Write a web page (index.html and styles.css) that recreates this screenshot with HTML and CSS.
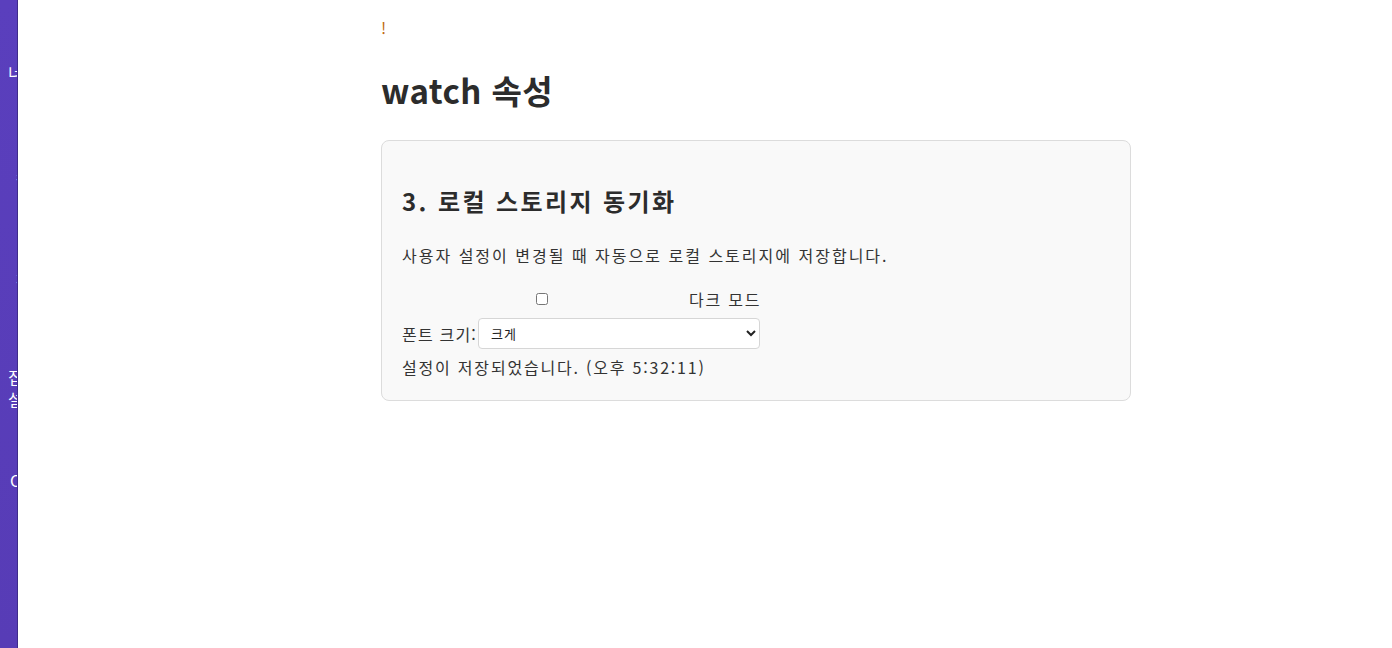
FILE: index.html
```html
<!DOCTYPE html>
<html lang="ko">
<head>
<meta charset="utf-8">
<title>watch 속성</title>
<link rel="stylesheet" href="styles.css">
</head>
<body>
<div class="layout">
  <nav class="sidebar">
    <div class="side-item side-a">너비</div>
    <div class="side-item side-b">ㅋ</div>
    <div class="side-item side-c">ㅈ</div>
    <div class="side-item side-d">집<br>설</div>
    <div class="side-item side-e">C</div>
  </nav>
  <main class="main">
    <div class="content">
      <p class="warn">!</p>
      <h1 class="title">watch 속성</h1>
      <section class="card">
        <h3 class="card-title">3. 로컬 스토리지 동기화</h3>
        <p class="desc">사용자 설정이 변경될 때 자동으로 로컬 스토리지에 저장합니다.</p>
        <div class="form">
          <label class="row">
            <span class="check-wrap"><input type="checkbox" class="check"></span>
            <span class="check-label">다크 모드</span>
          </label>
          <label class="row">
            <span class="field-label">폰트 크기:</span>
            <select class="select">
              <option>크게</option>
            </select>
          </label>
          <p class="status">설정이 저장되었습니다. (오후 5:32:11)</p>
        </div>
      </section>
    </div>
  </main>
</div>
</body>
</html>
```

FILE: styles.css
```css
* { box-sizing: border-box; }
html, body { margin: 0; padding: 0; }
body {
  font-family: "Noto Sans CJK KR", "Noto Sans", sans-serif;
  color: #333;
  background: #fff;
}
.layout {
  display: flex;
  min-height: 648px;
}
.sidebar {
  width: 18px;
  flex: 0 0 18px;
  background: linear-gradient(180deg, #5a3fbd 0%, #573cb6 100%);
  border-right: 1px solid #3f2c8a;
  overflow: hidden;
  color: #fff;
  font-size: 16px;
  line-height: 20px;
  white-space: nowrap;
}
.side-a { margin-top: 62px; padding-left: 8px; }
.side-b { margin-top: 86px; padding-left: 14px; }
.side-c { margin-top: 80px; padding-left: 14px; }
.side-d { margin-top: 78px; padding-left: 8px; line-height: 22px; }
.side-e { margin-top: 60px; padding-left: 10px; }
.main {
  flex: 1;
  padding-left: 363px;
}
.content {
  width: 750px;
}
.warn {
  margin: 0;
  padding-top: 16px;
  font-size: 16px;
  line-height: 22px;
  color: #c0690e;
}
.title {
  margin: 0;
  padding-top: 30px;
  font-size: 33px;
  line-height: 44px;
  font-weight: 700;
  letter-spacing: 0.4px;
  color: #2c2c2c;
}
.card {
  margin-top: 28px;
  background: #f9f9f9;
  border: 1px solid #dcdcdc;
  border-radius: 8px;
  padding: 44px 20px 21px;
}
.card-title {
  margin: 0;
  font-size: 24px;
  line-height: 32px;
  font-weight: 700;
  letter-spacing: 2.4px;
  color: #2c2c2c;
}
.desc {
  margin: 26px 0 0;
  font-size: 16px;
  line-height: 24px;
  letter-spacing: 2px;
}
.form {
  margin-top: 20px;
  display: flex;
  flex-direction: column;
  gap: 7px;
  font-size: 16px;
  letter-spacing: 1.8px;
}
.row {
  display: flex;
  align-items: center;
}
.check-wrap {
  width: 279px;
  display: flex;
  justify-content: center;
}
.check {
  margin: 0;
  width: 12px;
  height: 12px;
}
.check-label {
  margin-left: 8px;
}
.field-label {
  width: 76px;
  white-space: nowrap;
  letter-spacing: 1.2px;
}
.select {
  width: 282px;
  height: 31px;
  padding: 0 8px;
  font-family: "Noto Sans CJK KR", sans-serif;
  font-size: 13px;
  letter-spacing: 1px;
  color: #222;
  background: #fff;
  border: 1px solid #d6d6d6;
  border-radius: 4px;
}
.status {
  margin: -1px 0 0;
  line-height: 24px;
}
```
